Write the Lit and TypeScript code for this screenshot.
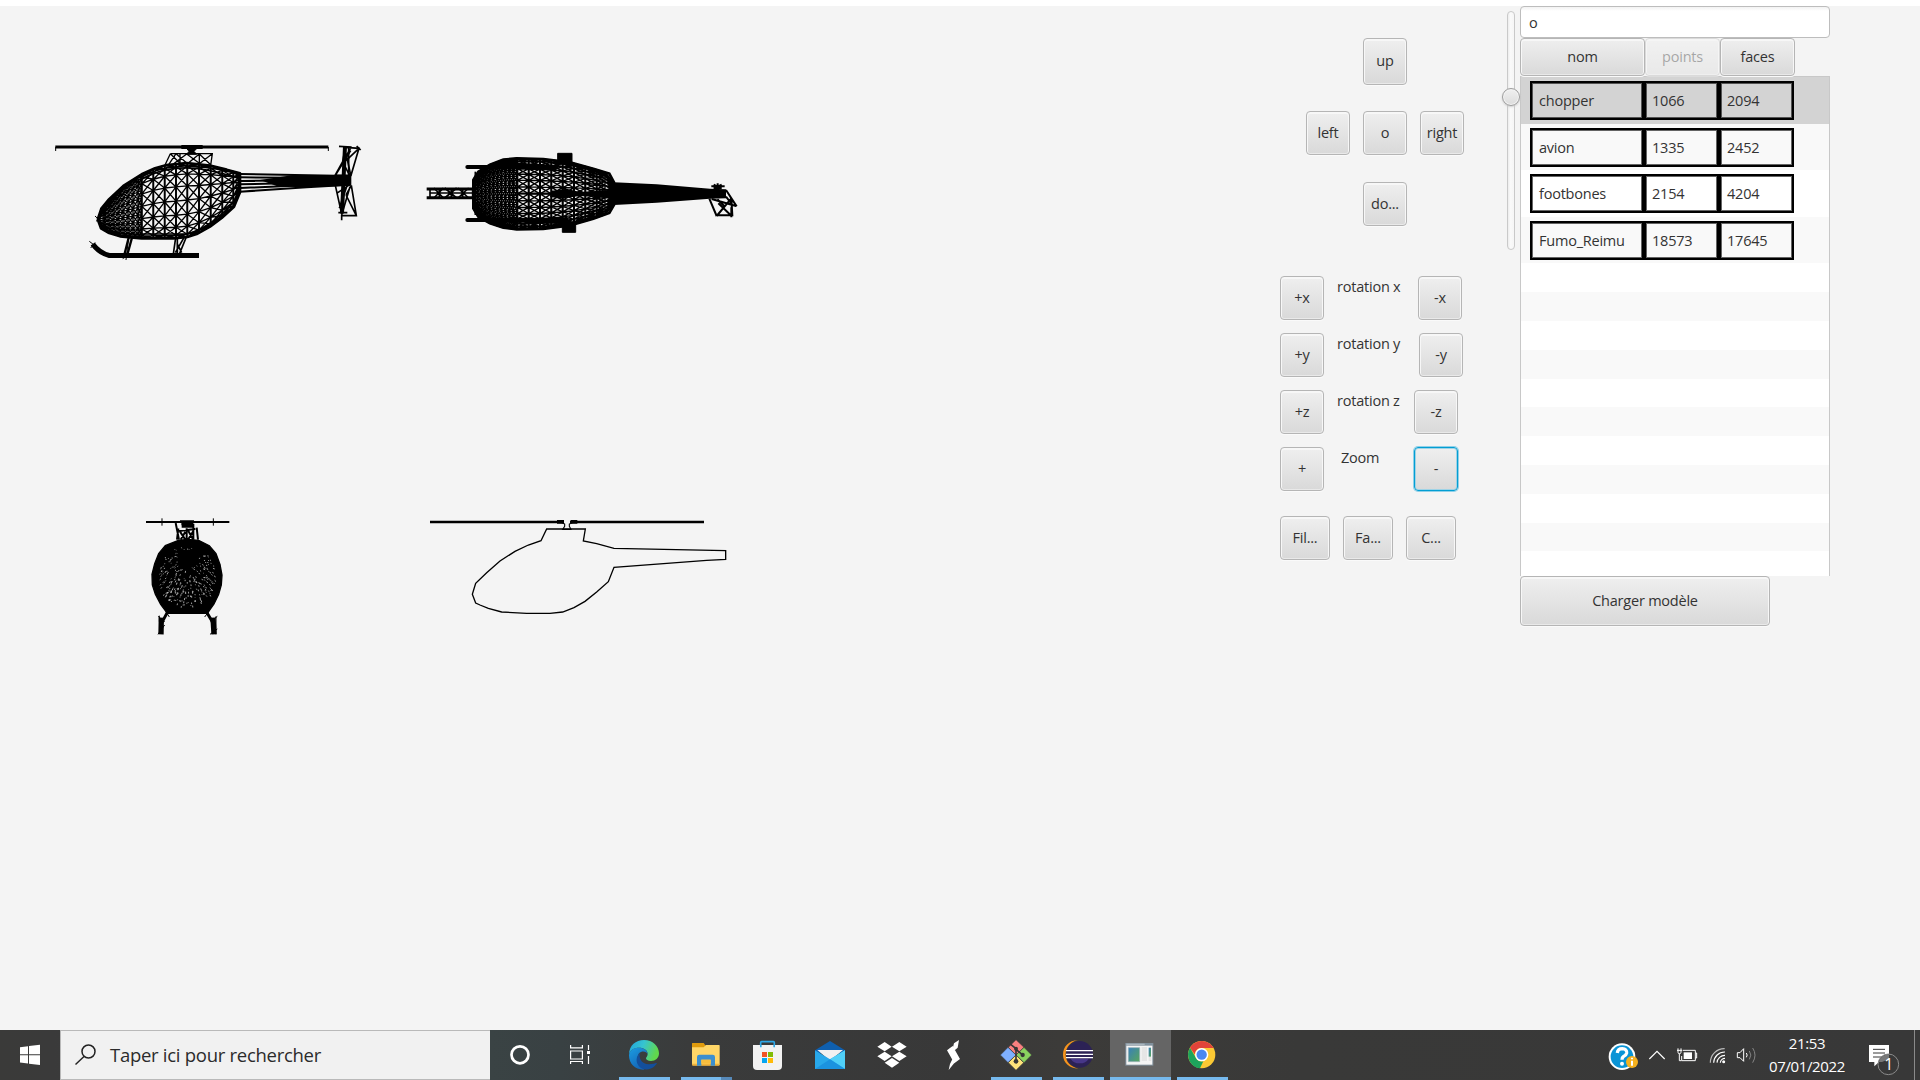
import { LitElement, html, svg, css } from "lit";
import { customElement, property } from "lit/decorators.js";
import { classMap } from "lit/directives/class-map.js";

type Pt = [number, number];

/** Linear interpolation of y along a polyline sorted by x. */
function at(line: Pt[], x: number): number {
  for (let i = 1; i < line.length; i++) {
    if (x <= line[i][0]) {
      const [x0, y0] = line[i - 1];
      const [x1, y1] = line[i];
      return y0 + ((y1 - y0) * (x - x0)) / (x1 - x0);
    }
  }
  return line[line.length - 1][1];
}

/** Triangulated strip mesh between an upper and a lower outline. */
function mesh(top: Pt[], bottom: Pt[], columns: number[], rows: number, cross = true): string {
  const grid = columns.map((x) => {
    const t = at(top, x);
    const b = at(bottom, x);
    return Array.from({ length: rows + 1 }, (_, i): Pt => {
      const k = 0.5 - 0.5 * Math.cos((Math.PI * i) / rows);
      return [x, t + (b - t) * k];
    });
  });
  const f = (p: Pt) => `${p[0].toFixed(1)} ${p[1].toFixed(1)}`;
  let d = "";
  grid.forEach((col, c) => {
    d += "M" + col.map(f).join("L");
    const next = grid[c + 1];
    if (!next) return;
    for (let r = 0; r <= rows; r++) {
      d += `M${f(col[r])}L${f(next[r])}`;
      if (r < rows) {
        d += `M${f(col[r])}L${f(next[r + 1])}`;
        if (cross) d += `M${f(col[r + 1])}L${f(next[r])}`;
      }
    }
  });
  return d;
}

const range = (from: number, to: number, step: number) => {
  const out: number[] = [];
  for (let v = from; v <= to + 0.01; v += step) out.push(v);
  return out;
};

const sideTop: Pt[] = [[174, 266], [184, 236], [205, 210], [250, 168], [305, 133], [345, 115], [380, 105], [440, 99], [510, 107], [560, 119], [600, 130]];
const sideBottom: Pt[] = [[174, 270], [183, 295], [205, 308], [240, 319], [305, 325], [400, 325], [442, 321], [470, 312], [510, 290], [545, 264], [582, 230], [600, 187]];
const planTop: Pt[] = [[190, 150], [205, 125], [240, 104], [280, 89], [320, 85], [400, 87], [480, 97], [550, 116], [598, 131], [612, 157]];
const planBottom: Pt[] = [[190, 235], [205, 260], [240, 280], [280, 293], [320, 298], [400, 297], [480, 286], [550, 266], [598, 249], [612, 225]];

const wide = [305, 340, 374, 408, 442, 477, 512, 547, 580, 600];

const sideView = () => svg`
  <g transform="translate(40 124) scale(.33333)" fill="none" stroke="#000" stroke-width="3">
    <path stroke-width="9" d="M46 51H865"/><path d="M47 51V63M865 51V63"/>
    <path stroke-width="12" d="M424 51H488"/><path fill="#000" d="M436 50H476L462 64L470 73H440L447 64Z"/>
    <path d="M391 71H517L512 106M391 71L375 105M391 71L420 100M408 71L386 104M408 71L440 99M440 72L400 102M440 72L478 100M478 72L445 99M478 72L512 104M517 71L478 101M420 72V100M478 72V100" stroke-width="4"/>
    <path d="${mesh(sideTop, sideBottom, wide, 8)}" stroke-width="4"/>
    <path d="M${wide.map((x) => `${x} ${at(sideTop, x)}V${at(sideBottom, x)}`).join("M")}" stroke-width="5.500"/>
    <path d="M305 148Q350 122 400 116T500 120T600 145M305 312H442Q520 290 590 205" stroke-width="5"/>
    <path d="${mesh(sideTop, sideBottom, [...range(174, 294, 15), 305], 12)}" stroke-width="4"/>
    <path stroke-width="8" stroke-linejoin="round" d="M${[...sideTop, ...[...sideBottom].reverse()].map((p) => p.join(" ")).join("L")}Z"/>
    <path d="M165 258L180 272M168 274L182 262" stroke-width="3"/>
    <path stroke-width="6" d="M600 132L930 138M600 142L930 144M600 153L930 150M600 163L930 155M600 174L930 160M600 185L800 172L930 164"/>
    <path fill="#000" stroke="none" d="M660 150L760 135H934V167L780 172L710 168Z"/>
    <path stroke-width="5" d="M886 135L908 95L916 52L957 55L933 136ZM910 95L932 54M918 92L957 55M888 133L932 62M908 95L928 135M918 70L932 135M897 49L935 51M950 48L962 60"/>
    <path stroke-width="12" d="M915 48L911 140L906 250"/>
    <path stroke-width="5" d="M926 50V140M886 166L906 256L949 257L934 166M890 190L926 166M905 255L930 170M918 195L949 257M918 195L934 166M895 248L922 248M898 235L920 170M905 255V271"/>
    <path stroke-width="15" d="M158 342Q178 369 208 376.500H477"/><path d="M148 334L166 348M152 354L166 338"/>
    <path stroke-width="7" d="M266 323L253 374M276 323L262 374"/><path d="M266 323L258 390M248 386L262 378"/>
    <path stroke-width="5" d="M407 323L400 372M412 323V372M439 321L419 370M432 323L406 368M411 340L425 368"/>
  </g>`;

const planView = () => svg`
  <g transform="translate(410 124) scale(.33333)" fill="none" stroke="#000" stroke-width="3">
    <path stroke-width="9" d="M50 177H196M50 203H196"/>
    <path stroke-width="5" d="M60 174V206M72 174L100 204M100 174L72 204M104 174L140 204M140 174L104 204M144 174L176 204M176 174L144 204M88 174V206M124 174V206M158 174V206M188 174V206M60 189H190"/>
    <path d="${mesh(planTop, planBottom, [322, 356, 390, 424, 458, 492, 526, 560, 585, 612], 16)}" stroke-width="4.200"/>
    <path d="M${[322, 356, 390, 424, 458, 492, 526, 560].map((x) => `${x} ${at(planTop, x)}V${at(planBottom, x)}`).join("M")}" stroke-width="6"/>
    <path d="${mesh(planTop, planBottom, range(190, 322, 12), 15)}" stroke-width="4.300"/>
    <path stroke-width="8" d="M${[...planTop, ...[...planBottom].reverse()].map((p) => p.join(" ")).join("L")}Z"/>
    <path stroke-width="5" d="M196 125V255"/>
    <path stroke-width="5" d="M322 190H600"/>
    <path fill="#000" stroke="none" d="M425 182L470 176L510 186L600 180L612 157L740 163L900 176L948 178V205L900 206L740 218L612 225L600 204L510 198L450 206L420 200Z"/>
    <path stroke-width="12" stroke-linecap="round" d="M172 111H440M172 270H470"/>
    <path stroke-width="10" d="M240 106L300 100L440 117M240 277L300 272L470 278"/>
    <path fill="#000" d="M443 70H486V102H443ZM457 276H497V307H457Z"/>
    <path stroke-width="6" d="M904 169H944M911 164L935 176M935 164L911 176M923 160V182"/>
    <path stroke-width="6" d="M898 206L920 258M916 256H967L964 204M964 262V232M920 258L964 205M925 220L964 257M905 207L978 228M948 180L980 229M922 208L945 230M948 200L965 222"/>
  </g>`;

/** Fixed-seed generator so the front mesh looks the same on every render. */
function specks(): string {
  let seed = 71;
  const rnd = () => ((seed = (seed * 16807) % 2147483647) / 2147483647);
  let d = "";
  for (let i = 0; i < 300; i++) {
    const a = rnd() * Math.PI * 2;
    const r = Math.sqrt(rnd());
    const x = 172 + Math.cos(a) * r * 85;
    const y = 216 + Math.sin(a) * r * 90;
    if (Math.abs(x - 175) < 30 && y > 135 && y < 178) continue;
    const len = 1.5 + rnd() * 4 * (y > 190 ? 1.2 : 0.6);
    const dx = (x - 172) / 95;
    const dy = (y - 170) / 70;
    const n = Math.hypot(dx, dy) || 1;
    d += `M${x.toFixed(1)} ${y.toFixed(1)}l${((dx / n) * len).toFixed(1)} ${((dy / n) * len).toFixed(1)}`;
  }
  return d;
}

const frontView = () => svg`
  <g transform="translate(130 499) scale(.33333)" fill="none" stroke="#000" stroke-width="4">
    <path stroke-width="6" d="M48 51H298"/><path d="M96 40V62M250 40V62" stroke-width="3"/>
    <path stroke-width="8" d="M150 50H192M154 57H190M155 64H190"/>
    <path stroke-width="6" d="M137 54L147 104M145 70L141 104M190 56V104M200 68L204 104M147 78L196 72M150 80L166 104M166 80L152 104M175 78L190 104M190 78L174 104M170 70V104"/>
    <path fill="#000" d="M145 106L172 103L206 106L238 122L258 146L270 178L276 210L274 240L266 268L252 297L232 325H112L92 298L76 268L67 240L66 208L74 176L86 146L106 122Z"/>
    <path d="${specks()}" stroke="#ccc" stroke-width="2.300"/>
    <path stroke-width="9" d="M112 322L96 352M230 322L248 352"/><path d="M108 320L118 336M236 320L224 336" stroke-width="3"/>
    <path stroke-width="16" d="M94 338L93 388M249 338L252 388"/><path stroke-width="3" d="M84 334L104 350M104 360L84 388M242 350L262 334M240 388L262 372M88 332V350M258 334V388"/>
  </g>`;

const outlineView = () => svg`
  <g transform="translate(420 499) scale(.33333)" fill="none" stroke="#000" stroke-width="3.300">
    <path stroke-width="8" d="M30 51H432M450 51H852"/><path stroke-width="11" d="M411 50.500H432M452 50.500H472"/>
    <path d="M424 52L434 57V64L428 73H453L448 64V57L460 52"/>
    <path stroke-width="4" d="M380 72H496L490 108L530 116L582 130L917 137V163L860 166L582 187L565 230L530 261L495 289L462 308L428 321L390 325H320L245 321L205 310L180 300L167 294L157 268L167 235L200 203L240 168L285 139L325 120L363 107Z"/>
  </g>`;

@customElement("fx-button")
class FxButton extends LitElement {
  @property() label = "";
  @property({ type: Boolean, reflect: true }) focused = false;
  @property({ type: Boolean, reflect: true }) disabled = false;
  static styles = css`
    :host { display: block; width: 44px; height: 44px; flex: none; }
    :host([disabled]) { opacity: 0.4; }
    .button {
      box-sizing: border-box; width: 100%; height: 100%; padding: 0 0 2px;
      display: flex; align-items: center; justify-content: center;
      border: 1px solid #b5b5b5; border-radius: 4px;
      background: linear-gradient(#efefef, #d9d9d9);
      box-shadow: inset 0 1px 0 1px #f7f7f7, inset 0 0 0 1px #e9e9e9, 0 1px 0 #fafafa;
      font: inherit; letter-spacing: inherit; color: #333; white-space: nowrap;
    }
    :host([focused]) .button { border-color: #039ed3; box-shadow: 0 0 0 1px #8fd0e8, inset 0 0 0 1px #9fd3e6; }
  `;
  render() {
    return html`<button class="button" ?disabled=${this.disabled}>${this.label}</button>`;
  }
}

const models = [
  { nom: "chopper", points: 1066, faces: 2094 },
  { nom: "avion", points: 1335, faces: 2452 },
  { nom: "footbones", points: 2154, faces: 4204 },
  { nom: "Fumo_Reimu", points: 18573, faces: 17645 },
];

@customElement("model-panel")
class ModelPanel extends LitElement {
  static styles = css`
    :host { display: block; width: 310px; flex: none; }
    .field {
      box-sizing: border-box; width: 310px; height: 32px; padding: 0 0 0 8px; display: flex; align-items: center;
      border: 1px solid #bdbdbd; border-radius: 4px; background: linear-gradient(#f2f2f2, #fff 4px);
    }
    .heads { display: flex; height: 38px; }
    .heads fx-button { width: 75px; height: 38px; }
    .heads .wide { width: 125px; }
    .list { box-sizing: border-box; height: 500px; border: solid #c8c8c8; border-width: 1px 1px 0; overflow: hidden; background: #fff; }
    .row { box-sizing: border-box; height: 46.600px; padding: 4px 0 0 9px; display: flex; background: #fff; }
    .row.odd { background: #f9f9f9; }
    .row.selected { background: #d3d3d3; }
    .cell {
      box-sizing: border-box; width: 75px; height: 39px; padding-left: 6px; display: flex; align-items: center;
      border: 2px solid #000; outline: 1px solid rgba(0, 0, 0, 0.5); outline-offset: -1px;
      box-shadow: inset 0 0 0 1px rgba(0, 0, 0, 0.6);
    }
    .cell.nom { width: 114px; padding-left: 7px; }
    .empty { height: 28.800px; }
    .empty.odd { background: #f9f9f9; }
    .load { width: 250px; height: 50px; }
  `;
  render() {
    return html`
      <div class="field">o</div>
      <div class="heads">
        <fx-button class="wide" label="nom"></fx-button>
        <fx-button label="points" disabled></fx-button>
        <fx-button label="faces"></fx-button>
      </div>
      <div class="list">
        ${models.map((m, i) => html`
          <div class=${classMap({ row: true, odd: i % 2 === 1, selected: i === 0 })}>
            <div class="cell nom">${m.nom}</div><div class="cell">${m.points}</div><div class="cell">${m.faces}</div>
          </div>`)}
        ${Array.from({ length: 11 }, (_, i) => html`<div class=${classMap({ empty: true, odd: i % 2 === 1 })}></div>`)}
      </div>
      <fx-button class="load" label="Charger modèle"></fx-button>`;
  }
}

const apps = [
  { x: 9, bar: [27, 153], art: svg`
    <defs><linearGradient id="e1" x1="0" y1="0" x2="1" y2=".3"><stop offset="0" stop-color="#1fa3df"/><stop offset=".5" stop-color="#36c4d0"/><stop offset="1" stop-color="#61d84c"/></linearGradient>
    <linearGradient id="e2" x1="0" y1="0" x2=".6" y2="1"><stop offset="0" stop-color="#1b9de2"/><stop offset="1" stop-color="#1463b5"/></linearGradient></defs>
    <path fill="url(#e1)" d="M57 103C58 76 77 60 102 60C128 60 147 79 147 100C147 115 136 123 123 123C113 123 108 119 108 115C108 111 113 110 113 102C113 90 101 83 88 83C72 83 60 91 57 103Z"/>
    <path fill="url(#e2)" d="M57 106C58 91 71 83 86 83C101 83 113 91 113 103C109 93 95 92 87 100C78 112 84 133 103 149C77 151 57 132 57 106Z"/>
    <path fill="#134f9c" d="M91 98C84 110 93 132 117 133C128 133 136 129 140 129C142 131 135 137 131 141C119 151 99 151 89 141C76 128 77 107 91 98Z"/>` },
  { x: 195, bar: [213, 120], art: svg`
    <path fill="#e09b0d" d="M246 70Q246 69 248 69H281L286 76V84H246Z"/><path fill="#ffd667" d="M246 82H281L288 75H327Q329 75 329 77V133Q329 136 326 136H249Q246 136 246 133Z"/>
    <path fill="#efb23c" d="M246 131H329V134Q329 137 326 137H249Q246 137 246 134Z"/>
    <path fill="#3b8fcf" d="M261 137V111Q261 104 268 104H308Q315 104 315 111V137H302V119H274V137Z"/><path fill="#f7bd3d" d="M274 119H302V131H274Z"/>
    <rect x="333" y="171" width="33" height="9" fill="#5689b9"/>` },
  { x: 381, bar: null, art: svg`
    <path fill="none" stroke="#2ea8e8" stroke-width="5" d="M452 80V68Q452 65 455 65H490Q493 65 493 68V80"/>
    <path fill="#f2f2f2" d="M429 75H516V138Q516 150 504 150H441Q429 150 429 138Z"/><path fill="#2ea8e8" d="M450 75H455V82H450ZM490 75H495V82H490Z"/>
    <path fill="#f35325" d="M456 96H471V111H456Z"/><path fill="#81bc06" d="M474 96H489V111H474Z"/><path fill="#05a6f0" d="M456 114H471V129H456Z"/><path fill="#ffba08" d="M474 114H489V129H474Z"/>` },
  { x: 567, bar: null, art: svg`
    <path fill="#0f5fae" d="M615 91L660 63L705 91V100H615Z"/><path fill="#f1f1f1" d="M622 90H699L660 122Z"/>
    <path fill="#28a8ea" d="M615 91L660 118L705 91V147H615Z"/><path fill="#50d0f8" d="M660 118L705 91V147Z"/><path fill="#1b93e0" d="M615 147L660 118L705 147Z"/>` },
  { x: 753, bar: null, art: svg`
    <path fill="#fff" d="M824 66L845 80L824 94L802 80ZM868 66L890 80L868 94L846 80ZM824 95L845 109L824 123L802 109ZM868 95L890 109L868 123L846 109ZM846 114L868 128L846 143L824 128Z"/>` },
  { x: 9, bar: null, art: svg`
    <path fill="#fff" d="M117 60L113 83L104 91L99 82L102 70ZM81 91L98 78L120 117L103 130ZM103 129L86 150L90 132L97 118Z"/>` },
  { x: 195, bar: [213, 153], art: svg`
    <g stroke="#3a3a3a" stroke-width="2"><path fill="#f98080" d="M288 59L312 82L288 106L265 82Z"/><path fill="#7fb0ff" d="M264 82L288 105L264 128L241 105Z"/><path fill="#8ad15f" d="M312 82L335 105L312 128L288 105Z"/><path fill="#ffe37b" d="M288 105L311 128L288 151L265 128Z"/></g>
    <path fill="none" stroke="#363636" stroke-width="5" d="M272 73L288 86V122M288 88L307 104"/><circle cx="288" cy="86" r="6" fill="#363636"/><circle cx="288" cy="124" r="7" fill="#363636"/><circle cx="308" cy="105" r="6.500" fill="#363636"/>` },
  { x: 381, bar: [399, 153], art: svg`
    <path fill="#f7941e" d="M474 60C447 61 429 80 429 104C429 127 448 145 475 146C451 139 437 125 437 104C437 82 451 65 474 60Z"/>
    <circle cx="479" cy="103" r="40" fill="#2c2255"/><path fill="#473788" d="M452 116H506Q498 130 479 130Q460 130 452 116Z"/><path fill="#fff" d="M438 90H519V94H438ZM438 101H519V105H438ZM438 111H519V115H438Z"/>` },
  { x: 567, bar: [570, 183], art: svg`
    <defs><linearGradient id="w" x1="0" y1="0" x2="1" y2="1"><stop offset="0" stop-color="#397fba"/><stop offset="1" stop-color="#58a65c"/></linearGradient></defs>
    <rect x="570" y="30" width="183" height="141" fill="#656565"/><path fill="#80909c" d="M616 69H700V137H616Z"/><path fill="#f5f5f5" d="M619 77H697V134H619Z"/><path fill="#aab5bd" d="M619 71H674V76H619Z"/>
    <path fill="url(#w)" stroke="#9ab0b8" stroke-width="2" d="M625 83H659V125H625Z"/><path stroke="#c8c8c8" stroke-width="2" d="M665 84H681M665 90H681M665 96H681M665 102H681M665 108H681M665 114H681M665 120H681M686 114H694M686 120H694"/><path fill="url(#w)" d="M686 83H693V110H686Z"/>` },
  { x: 753, bar: [771, 153], art: svg`
    <circle cx="845" cy="104" r="41" fill="#fbc934"/><path fill="#e0433a" d="M810 83A41 41 0 0 1 881 84H845A20 20 0 0 0 827 94L824 103Z"/>
    <path fill="#1da45c" d="M810 83L828 114A20 20 0 0 0 850 124L840 145A41 41 0 0 1 810 83Z"/><circle cx="845" cy="104" r="20" fill="#fff"/><circle cx="845" cy="104" r="15.500" fill="#4b88f0"/>` },
];

@customElement("task-bar")
class TaskBar extends LitElement {
  static styles = css`
    :host { display: flex; height: 50px; background: linear-gradient(90deg, #3a3a39 0, #3a3a3a 51px, #3a4344 490px, #394143 560px, #3a3b3b 690px, #383838 960px, #3c3b39 1060px, #393938 1300px, #383838); color: #fff; }
    svg { display: block; height: 50px; flex: none; }
    .search { box-sizing: border-box; width: 430px; display: flex; border: 1px solid #b9b9b9; border-width: 1px 0 1px 1px; background: #f1f1f1; color: #2b2b2b; font-size: 18.500px; letter-spacing: -0.280px; line-height: 48px; }
    .search svg { width: 49px; height: 48px; }
    .push { flex: 1; }
    .clock { width: 92px; padding-top: 2px; text-align: center; font-size: 15px; letter-spacing: -0.380px; line-height: 23px; margin-left: -1px; margin-right: 1px; }
    .clock div { white-space: nowrap; }
  `;
  render() {
    return html`
      <svg width="60" viewBox="0 0 60 50"><path fill="#fff" d="M20 17.300L28 16.200V24.300H20ZM29 16L40 14.800V24.300H29ZM20 25.300H28V33.500L20 32.400ZM29 25.300H40V35L29 33.700Z"/></svg>
      <div class="search">
        <svg viewBox="0 0 49 48"><circle cx="27.500" cy="20.500" r="6.500" fill="none" stroke="#222" stroke-width="1.500"/><path d="M23 25.500L14.500 33.500" stroke="#222" stroke-width="1.500"/></svg>
        <span>Taper ici pour rechercher</span>
      </div>
      <svg width="61" viewBox="0 0 61 50"><circle cx="30" cy="24.800" r="8.500" fill="none" stroke="#fff" stroke-width="2.700"/></svg>
      <svg width="62" viewBox="551 0 62 50"><path fill="none" stroke="#fff" stroke-width="1.200" d="M570.600 15V17.800H582.400V15M570.600 21H582.400V29H570.600ZM570.600 34V31.500H582.400V34M588.500 15V20M588.500 26V34"/><path fill="#fff" d="M587 21H590V24H587Z"/></svg>
      ${apps.map((a) => html`
        <svg width="62" viewBox="${a.x} 30 186 150">${a.art}${a.bar ? svg`<rect x=${a.bar[0]} y="171" width=${a.bar[1]} height="9" fill="#76b9ed"/>` : null}</svg>`)}
      <div class="push"></div>
      <svg width="40" viewBox="69 30 120 150"><circle cx="126" cy="110" r="40" fill="#fff"/><circle cx="126" cy="110" r="34" fill="#0a94d6"/>
        <path fill="none" stroke="#fff" stroke-width="10" d="M112 99Q113 86 127 86Q141 87 140 99Q139 105 130 110Q126 113 126 119"/><circle cx="126" cy="131" r="6" fill="#fff"/>
        <circle cx="156" cy="126" r="18" fill="#f5b11f"/><path fill="#fff" d="M153 122H159V137H153ZM153 113H159V118H153Z"/></svg>
      <svg width="28" viewBox="189 30 84 150"><path fill="none" stroke="#fff" stroke-width="3.500" d="M208 117L231 94L254 117"/></svg>
      <svg width="31" viewBox="273 30 93 150"><path fill="none" stroke="#fff" stroke-width="3" d="M309 91H346V122H305V108M346 99H350V114H346M294 85V97Q294 101 298 101Q303 101 303 97V85M291 91H307M298 101V122H304"/><path fill="#fff" d="M311 97H336V117H311Z"/></svg>
      <svg width="30" viewBox="366 30 90 150"><g fill="none" stroke="#fff" stroke-width="3.500"><path stroke="#bbb" d="M391 128A42 42 0 0 1 434 86"/><path d="M401 128A33 33 0 0 1 435 96M411 128A24 24 0 0 1 435 106M421 128A14 14 0 0 1 435 115"/></g><circle cx="431" cy="125" r="4.500" fill="#fff"/></svg>
      <svg width="30" viewBox="456 30 90 150"><path fill="none" stroke="#fff" stroke-width="3" d="M472 98H480L491 86V124L480 113H472ZM499 99Q504 105 499 112"/><path fill="none" stroke="#858585" stroke-width="3" d="M508 93Q517 105 508 118M518 84Q532 105 518 128"/></svg>
      <div class="clock"><div>21:53</div><div>07/01/2022</div></div>
      <svg width="56" viewBox="822 30 168 150"><path fill="#fff" d="M867 75H927V126H897L883 139V126H867Z"/><path stroke="#383838" stroke-width="3" d="M879 88H915M879 99H915M879 111H905"/>
        <circle cx="925" cy="133" r="31" fill="#383838" stroke="#8b8b8b" stroke-width="3"/><path fill="#777" d="M896 126A31 31 0 0 1 927 103V117L906 126Z"/>
        <text x="926" y="150" text-anchor="middle" font-size="48" fill="#fff">1</text></svg>
      <svg width="10" viewBox="0 0 10 50"><path stroke="#8a8a8a" d="M4.500 0V50"/></svg>`;
  }
}

const axes = [
  { plus: "+x", label: "rotation x", minus: "-x", cls: "x" },
  { plus: "+y", label: "rotation y", minus: "-y", cls: "y" },
  { plus: "+z", label: "rotation z", minus: "-z", cls: "z" },
  { plus: "+", label: "Zoom", minus: "-", cls: "zoom" },
];

@customElement("app-root")
class AppRoot extends LitElement {
  static styles = css`
    :host { display: flex; flex-direction: column; width: 1920px; height: 1080px; overflow: hidden; background: #f4f4f4; color: #333; font: 14.500px "Open Sans", "Noto Sans", sans-serif; letter-spacing: -0.220px; }
    .strip { height: 6px; background: #fff; flex: none; }
    .content { flex: 1; display: flex; min-height: 0; }
    .view { width: 1280px; flex: none; }
    .view svg { display: block; }
    .controls { width: 222px; flex: none; padding-top: 32px; }
    .pad { display: grid; grid-template-columns: repeat(3, 44px); grid-template-rows: 47px 45px 44px; align-items: start; column-gap: 13px; row-gap: 26px; padding-left: 26px; }
    .pad .up { grid-column: 2; height: 47px; }
    .pad .left { grid-column: 1; }
    .pad .down { grid-column: 2; }
    .axes { display: flex; flex-direction: column; gap: 13px; padding-top: 50px; }
    .axis { display: flex; }
    .name { box-sizing: border-box; padding-left: 13px; line-height: 21px; width: 94px; white-space: nowrap; }
    .y .name { width: 95px; }
    .z .name, .zoom .name { width: 90px; }
    .zoom .name { padding-left: 17px; }
    .tools { display: flex; gap: 13px; padding-top: 25px; }
    .tools fx-button { width: 50px; }
    .slider { width: 18px; flex: none; padding-top: 5px; }
    .track { box-sizing: border-box; position: relative; width: 8px; height: 239px; margin-left: 5px; border: 1px solid #c9c9c9; border-radius: 4px; background: linear-gradient(90deg, #ececec, #fafafa 40%, #f6f6f6); }
    .thumb { box-sizing: border-box; position: absolute; left: -6px; top: 76px; width: 18px; height: 18px; border: 1px solid #9d9d9d; border-radius: 50%; background: linear-gradient(#f0f0f0, #dcdcdc); box-shadow: inset 0 0 0 1px #f4f4f4, 0 1px 2px #ccc; }
  `;
  render() {
    return html`
      <div class="strip"></div>
      <div class="content">
        <div class="view"><svg width="800" height="700" viewBox="0 0 800 700">${sideView()}${planView()}${frontView()}${outlineView()}</svg></div>
        <div class="controls">
          <div class="pad">
            <fx-button class="up" label="up"></fx-button>
            <fx-button class="left" label="left"></fx-button>
            <fx-button label="o"></fx-button>
            <fx-button label="right"></fx-button>
            <fx-button class="down" label="do..."></fx-button>
          </div>
          <div class="axes">
            ${axes.map((a) => html`
              <div class="axis ${a.cls}">
                <fx-button label=${a.plus}></fx-button>
                <div class="name">${a.label}</div>
                <fx-button label=${a.minus} ?focused=${a.cls === "zoom"}></fx-button>
              </div>`)}
          </div>
          <div class="tools">
            <fx-button label="Fil..."></fx-button><fx-button label="Fa..."></fx-button><fx-button label="C..."></fx-button>
          </div>
        </div>
        <div class="slider"><div class="track"><div class="thumb"></div></div></div>
        <model-panel></model-panel>
      </div>
      <task-bar></task-bar>`;
  }
}
